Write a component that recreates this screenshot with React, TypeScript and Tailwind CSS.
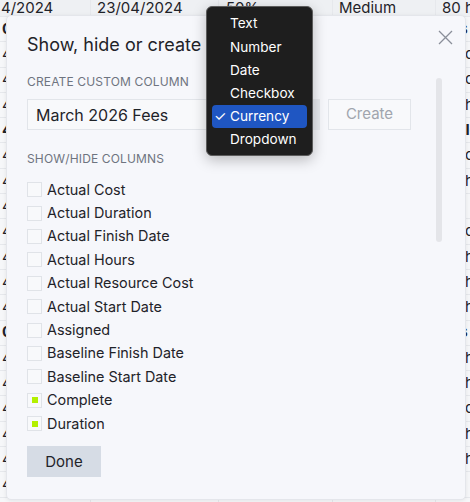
import React from "react";

const bgRows = [
  { a: "4/2024", b: "23/04/2024", c: "50%", d: "Medium", e: "80 hours", bold: false, head: true },
  { a: "0.", b: "", c: "", d: "", e: "Hrs", bold: true },
  { a: "4/04/2024", b: "", c: "", d: "", e: "80 cost", bold: false },
  { a: "4/04/2024", b: "", c: "", d: "", e: "80 cost", bold: false },
  { a: "4/04/2024", b: "", c: "", d: "", e: "80 hus", bold: false },
  { a: "4/04/2024", b: "", c: "", d: "", e: "80 Id", bold: true },
  { a: "4/04/2024", b: "", c: "", d: "", e: "80 cost", bold: false },
  { a: "4/04/2024", b: "", c: "", d: "", e: "80 hus", bold: false },
  { a: "4/04/2024", b: "", c: "", d: "", e: "", bold: false },
  { a: "4/04/2024", b: "", c: "", d: "", e: "80 cost", bold: false },
  { a: "4/04/2024", b: "", c: "", d: "", e: "80 hus", bold: false },
  { a: "4/04/2024", b: "", c: "", d: "", e: "80 hus", bold: false },
  { a: "4/04/2024", b: "", c: "", d: "", e: "80 hus", bold: false },
  { a: "0.", b: "", c: "", d: "", e: "Hrs", bold: true },
  { a: "4/04/2024", b: "", c: "", d: "", e: "80 hrs", bold: false },
  { a: "4/04/2024", b: "", c: "", d: "", e: "80 hus", bold: false },
  { a: "4/04/2024", b: "", c: "", d: "", e: "80 cost", bold: false },
  { a: "4/04/2024", b: "", c: "", d: "", e: "80 hrs", bold: false },
  { a: "4/04/2024", b: "", c: "", d: "", e: "80 hus", bold: false },
  { a: "4/04/2024", b: "", c: "", d: "", e: "", bold: false },
  { a: "4/04/2024", b: "", c: "", d: "", e: "", bold: false },
];

const columns: { name: string; checked: boolean }[] = [
  { name: "Actual Cost", checked: false },
  { name: "Actual Duration", checked: false },
  { name: "Actual Finish Date", checked: false },
  { name: "Actual Hours", checked: false },
  { name: "Actual Resource Cost", checked: false },
  { name: "Actual Start Date", checked: false },
  { name: "Assigned", checked: false },
  { name: "Baseline Finish Date", checked: false },
  { name: "Baseline Start Date", checked: false },
  { name: "Complete", checked: true },
  { name: "Duration", checked: true },
];

const options = ["Text", "Number", "Date", "Checkbox", "Currency", "Dropdown"];

export default function App() {
  return (
    <div
      className="relative w-[470px] h-[502px] overflow-hidden bg-[#f6f7f9] text-[#1f2329] antialiased"
      style={{ fontFamily: "Inter, 'Noto Sans', sans-serif" }}
    >
      {/* background table */}
      <div className="flex flex-col">
        {bgRows.map((r, i) => (
          <div
            key={i}
            className={`flex items-center border-b border-[#e6e8ec] text-[15px] ${
              r.head ? "bg-[#eef0f3] h-[17px]" : "h-[25.3px]"
            } ${r.bold ? "font-bold" : ""}`}
          >
            <div className={`w-[91px] shrink-0 h-full flex items-center border-r border-[#e6e8ec] ${r.head ? "pl-[1px]" : "pl-[2px]"}`}>
              <span className="whitespace-nowrap">{r.a}</span>
            </div>
            <div className="w-[128px] shrink-0 h-full flex items-center border-r border-[#e6e8ec] pl-[6px]">
              <span className="whitespace-nowrap">{r.b}</span>
            </div>
            <div className="w-[114px] shrink-0 h-full flex items-center border-r border-[#e6e8ec] pl-[7px]">
              <span className="whitespace-nowrap">{r.c}</span>
            </div>
            <div className="w-[103px] shrink-0 h-full flex items-center border-r border-[#e6e8ec] pl-[6px]">
              <span className="whitespace-nowrap">{r.d}</span>
            </div>
            <div className="shrink-0 h-full flex items-center pl-[6px]">
              <span className="whitespace-nowrap">{r.e}</span>
            </div>
          </div>
        ))}
      </div>

      {/* modal */}
      <div className="absolute left-[6px] top-[15px] w-[460px] h-[485px] rounded-[5px] bg-[#f6f7fb] border border-[#e4e6eb] shadow-[0_1px_4px_rgba(0,0,0,0.08)]">
        <div className="relative pl-[20px] pt-[17px] flex flex-col">
          <div className="text-[18px] leading-[24px] text-[#1f2329] whitespace-nowrap">
            Show, hide or create columns
          </div>
          <button className="absolute right-[12px] top-[13px] w-[16px] h-[16px] flex items-center justify-center">
            <svg width="15" height="15" viewBox="0 0 15 15" fill="none">
              <path d="M1 1L14 14M14 1L1 14" stroke="#8a8f99" strokeWidth="1.3" />
            </svg>
          </button>

          <div className="mt-[17px] text-[12px] leading-[16px] tracking-[0.15px] text-[#6e7480]">
            CREATE CUSTOM COLUMN
          </div>
          <div className="mt-[9px] flex items-center h-[31px]">
            <div className="w-[186px] h-full border border-[#e2e5ea] bg-[#f8f9fb] flex items-center pl-[8px] text-[16px] text-[#1f2329]">
              March 2026 Fees
            </div>
            <div className="w-[107px] h-full bg-[#e8eaee]"></div>
            <button className="ml-[8px] w-[83px] h-full border border-[#e2e5ea] bg-[#f8f9fb] flex items-center justify-center text-[15px] text-[#a0a5ae]">
              Create
            </button>
          </div>

          <div className="mt-[21px] text-[12px] leading-[16px] tracking-[0.15px] text-[#6e7480]">
            SHOW/HIDE COLUMNS
          </div>
          <div className="mt-[11px] flex flex-col">
            {columns.map((c) => (
              <div key={c.name} className="h-[23.4px] flex items-center gap-[5px]">
                <div className="w-[15px] h-[15px] border border-[#e0e3e8] bg-[#f8f9fb] flex items-center justify-center">
                  {c.checked && <div className="w-[6px] h-[6px] bg-[#b3f000]" />}
                </div>
                <span className="text-[14.4px] text-[#1f2329] leading-[20px]">{c.name}</span>
              </div>
            ))}
          </div>

          <button className="mt-[11px] w-[74px] h-[31px] bg-[#d6dce5] flex items-center justify-center text-[15px] text-[#1f2329]">
            Done
          </button>
        </div>

        {/* scrollbar */}
        <div className="absolute left-[429px] top-[62px] w-[6px] h-[164px] rounded-full bg-[#e4e5e9]" />
      </div>

      {/* dropdown menu */}
      <div className="absolute left-[206px] top-[6px] w-[107px] h-[150px] rounded-[6px] bg-[#1e1e1e] border border-[#5c5c5c] shadow-[0_4px_14px_rgba(0,0,0,0.25)] px-[5px] pt-[5px] flex flex-col">
        {options.map((o) => (
          <div
            key={o}
            className={`h-[23.2px] flex items-center rounded-[4px] text-[13.6px] text-white ${
              o === "Currency" ? "bg-[#1f56c2]" : ""
            }`}
          >
            <span className="w-[18px] pl-[2px] text-[14px] leading-none">{o === "Currency" ? "✓" : ""}</span>
            <span>{o}</span>
          </div>
        ))}
      </div>
    </div>
  );
}
